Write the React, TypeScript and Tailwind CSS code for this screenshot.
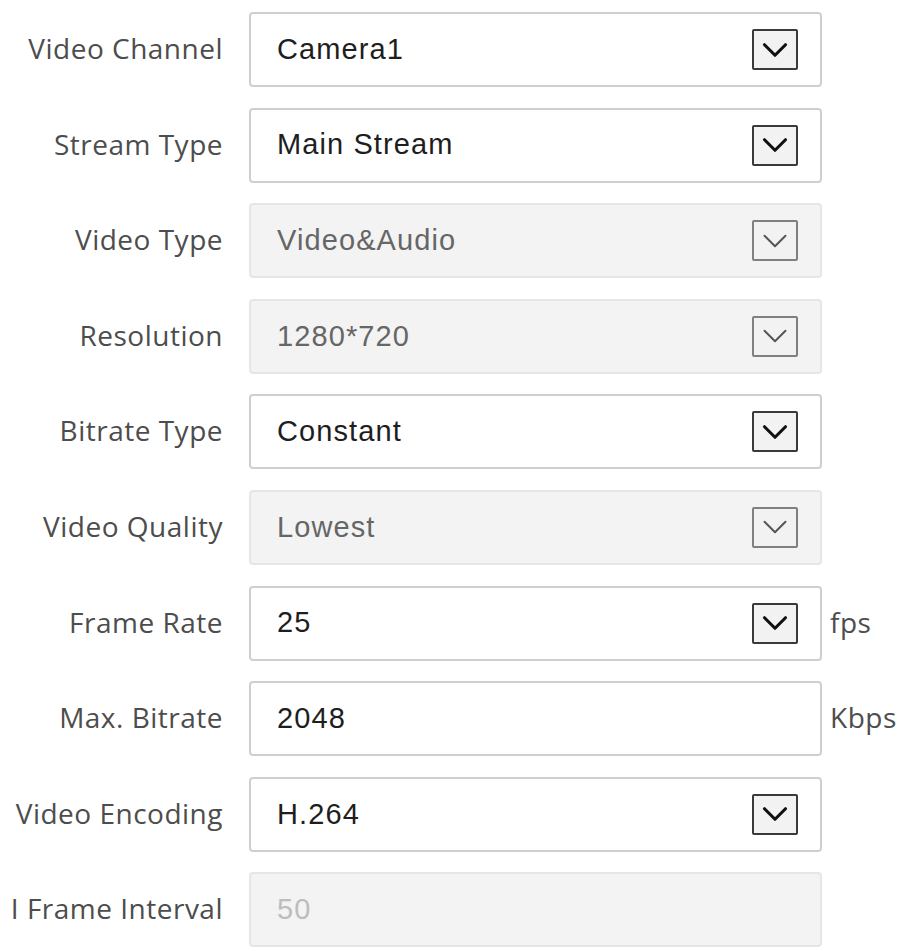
type Field = {
  label: string;
  value: string;
  kind: "select" | "input";
  disabled?: boolean;
  unit?: string;
  muted?: boolean;
};

const fields: Field[] = [
  { label: "Video Channel", value: "Camera1", kind: "select" },
  { label: "Stream Type", value: "Main Stream", kind: "select" },
  { label: "Video Type", value: "Video&Audio", kind: "select", disabled: true },
  { label: "Resolution", value: "1280*720", kind: "select", disabled: true },
  { label: "Bitrate Type", value: "Constant", kind: "select" },
  { label: "Video Quality", value: "Lowest", kind: "select", disabled: true },
  { label: "Frame Rate", value: "25", kind: "select", unit: "fps" },
  { label: "Max. Bitrate", value: "2048", kind: "input", unit: "Kbps" },
  { label: "Video Encoding", value: "H.264", kind: "select" },
  { label: "I Frame Interval", value: "50", kind: "input", disabled: true, muted: true },
];

function Chevron({ disabled }: { disabled?: boolean }) {
  return (
    <div
      className={
        "w-[46px] h-[41px] flex items-center justify-center bg-[#f2f2f2] border-2 rounded-[2px] " +
        (disabled ? "border-[#808080]" : "border-[#3a3a3a]")
      }
    >
      <svg viewBox="0 0 24 24" className="w-[28px] h-[28px]" fill="none">
        <path
          d="M3 7.5L12 16.5 21 7.5"
          stroke={disabled ? "#555" : "#111"}
          strokeWidth={disabled ? 1.7 : 2.7}
          strokeLinecap="round"
          strokeLinejoin="round"
        />
      </svg>
    </div>
  );
}

export default function App() {
  return (
    <div className="w-[909px] h-[951px] bg-white pt-[12px] flex flex-col gap-[20.6px]">
      {fields.map((f) => (
        <div key={f.label} className="flex items-center">
          <div className="w-[223px] pb-[3px] text-right text-[28px] text-[#4d4d4d] font-['Open_Sans',sans-serif] tracking-[0.5px] shrink-0 whitespace-nowrap">
            {f.label}
          </div>
          <div
            className={
              "ml-[26px] w-[573px] h-[75px] rounded-[4px] border-2 flex items-center pl-[26px] pr-[22px] " +
              (f.disabled ? "bg-[#f3f3f3] border-[#e6e6e6]" : "bg-white border-[#cfcfcf]")
            }
          >
            <span
              className={
                "flex-1 text-[29px] tracking-[1.1px] font-['Liberation_Sans',Arial,sans-serif] " +
                (f.muted ? "text-[#bdbdbd]" : f.disabled ? "text-[#666]" : "text-[#1e1e1e]")
              }
            >
              {f.value}
            </span>
            {f.kind === "select" && <Chevron disabled={f.disabled} />}
          </div>
          {f.unit && (
            <span className="ml-[8px] pb-[3px] text-[28px] tracking-[0.5px] text-[#4d4d4d] font-['Open_Sans',sans-serif]">
              {f.unit}
            </span>
          )}
        </div>
      ))}
    </div>
  );
}
